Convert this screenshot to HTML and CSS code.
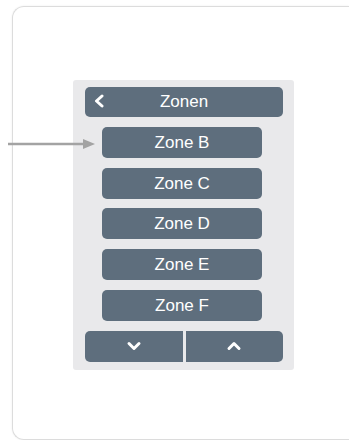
FILE: index.html
```html
<!DOCTYPE html>
<html>
  <head>
    <meta charset="UTF-8" />
    <title>Zonen</title>
    <link rel="stylesheet" href="styles.css">
  </head>
  <body>
    <div class="card">
      <div class="panel">
        <div class="btn header">
          <svg class="back" width="12" height="14" viewBox="0 0 12 14">
            <path d="M9 2 L3.5 7 L9 12" fill="none" stroke="#fff" stroke-width="3" stroke-linecap="round" stroke-linejoin="round" />
          </svg>
          <span>Zonen</span>
        </div>
        <div class="btn zone">Zone B</div>
        <div class="btn zone">Zone C</div>
        <div class="btn zone">Zone D</div>
        <div class="btn zone">Zone E</div>
        <div class="btn zone">Zone F</div>
        <div class="nav">
          <div class="btn nav-btn left">
            <svg width="16" height="10" viewBox="0 0 16 10">
              <path d="M3 2.5 L8 7.5 L13 2.5" fill="none" stroke="#fff" stroke-width="3" stroke-linecap="round" stroke-linejoin="round" />
            </svg>
          </div>
          <div class="btn nav-btn right">
            <svg width="16" height="10" viewBox="0 0 16 10">
              <path d="M3 7.5 L8 2.5 L13 7.5" fill="none" stroke="#fff" stroke-width="3" stroke-linecap="round" stroke-linejoin="round" />
            </svg>
          </div>
        </div>
      </div>
    </div>

    <!-- pointer arrow to Zone B -->
    <svg class="pointer" width="100" height="14" viewBox="0 0 100 14">
      <line x1="8" y1="7" x2="85" y2="7" stroke="#a3a3a3" stroke-width="2.5" />
      <path d="M83 2 L95 7 L83 12 Z" fill="#a3a3a3" />
    </svg>
  </body>
</html>
```

FILE: styles.css
```css
body {
  margin: 0;
  overflow: hidden;
  background-color: #fff;
  font-family: "Liberation Sans", Arial, sans-serif;
}

.card {
  margin: 6px 0 0 12px;
  width: 337px;
  height: 434px;
  border: 1px solid #dcdcdc;
  border-right: none;
  border-radius: 12px 0 0 12px;
  box-shadow: 0 0 2px rgba(0, 0, 0, 0.08);
  padding: 73px 0 0 60px;
  box-sizing: border-box;
}

.panel {
  width: 221px;
  height: 290px;
  background-color: #e9e9eb;
  border-radius: 3px;
  padding: 7px 11px 0 12px;
  box-sizing: border-box;
  display: flex;
  flex-direction: column;
  align-items: center;
  gap: 9.75px;
}

.btn {
  background-color: #5e6e7d;
  color: #fff;
  border-radius: 5px;
  display: flex;
  align-items: center;
  justify-content: center;
  font-size: 17px;
  box-sizing: border-box;
}

.header {
  width: 100%;
  height: 30px;
  position: relative;
}

.header .back {
  position: absolute;
  left: 8px;
  top: 7px;
}

.zone {
  align-self: flex-start;
  margin-left: 17px;
  width: 160px;
  height: 31px;
  padding-top: 1px;
}

.nav {
  width: 100%;
  height: 31px;
  display: flex;
  gap: 3px;
}

.nav-btn {
  flex: 1;
  height: 100%;
}

.nav-btn.left {
  border-radius: 5px 0 0 5px;
}

.nav-btn.right {
  border-radius: 0 5px 5px 0;
}

.pointer {
  position: absolute;
  left: 0;
  top: 137px;
}
```
